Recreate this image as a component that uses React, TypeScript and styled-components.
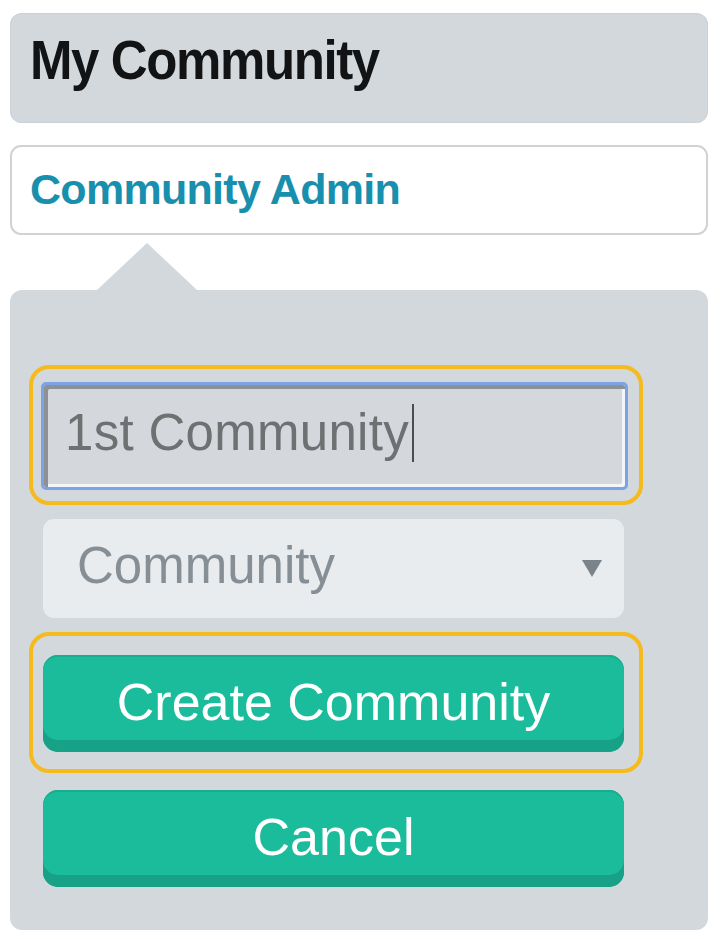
import React from "react";
import styled, { createGlobalStyle } from "styled-components";

const GlobalStyle = createGlobalStyle`
  html, body {
    margin: 0;
    padding: 0;
    background: #ffffff;
  }
  body {
    font-family: "Liberation Sans", Arial, Helvetica, sans-serif;
  }
`;

const Page = styled.div`
  width: 698px;
  padding: 13px 12px 9px 10px;
  display: flex;
  flex-direction: column;
`;

const Header = styled.div`
  box-sizing: border-box;
  height: 110px;
  padding: 20px 20px 0 20px;
  background: #d3d8dc;
  border-radius: 12px;
  box-shadow: inset 0 0 0 1px #cdd2d6;
`;

const Title = styled.h1`
  margin: 0;
  font-size: 51px;
  line-height: 58px;
  font-weight: 700;
  letter-spacing: -1.4px;
  color: #111314;
  transform: scaleY(1.1);
  transform-origin: left 80%;
`;

const AdminBox = styled.div`
  box-sizing: border-box;
  margin-top: 22px;
  height: 90px;
  padding: 17px 18px 0 18px;
  background: #ffffff;
  border: 2px solid #d0d2d4;
  border-radius: 11px;
`;

const AdminLink = styled.a`
  font-size: 43px;
  line-height: 50px;
  font-weight: 700;
  letter-spacing: -0.7px;
  color: #1890ad;
  text-decoration: none;
`;

const Panel = styled.div`
  position: relative;
  margin-top: 55px;
  height: 640px;
  box-sizing: border-box;
  padding: 75px 65px 43px 19px;
  background: #d3d8dc;
  border-radius: 12px;
  display: flex;
  flex-direction: column;

  &::before {
    content: "";
    position: absolute;
    left: 87px;
    top: -47px;
    width: 0;
    height: 0;
    border-left: 50px solid transparent;
    border-right: 50px solid transparent;
    border-bottom: 47px solid #d3d8dc;
  }
`;

const FocusRing = styled.div<{ $pad: string; $mt?: number }>`
  box-sizing: border-box;
  margin-top: ${(p) => p.$mt ?? 0}px;
  padding: ${(p) => p.$pad};
  border: 4px solid #f5ba1e;
  border-radius: 20px;
  display: flex;
  flex-direction: column;
`;

const TextInput = styled.div`
  box-sizing: border-box;
  height: 108px;
  width: 587px;
  padding: 0 0 6px 21px;
  display: flex;
  align-items: center;
  background: #d4d8dc;
  border: 3px solid #7ca3e4;
  border-radius: 5px;
  box-shadow: inset 4px 4px 0 #8d9095, inset -3px -3px 0 #f3f6f9;
  font-size: 51px;
  line-height: 58px;
  letter-spacing: 0.3px;
  color: #6e7072;
`;

const Caret = styled.span`
  display: inline-block;
  width: 2px;
  height: 58px;
  margin-left: 3px;
  background: #4a4c4e;
`;

const Select = styled.div`
  box-sizing: border-box;
  margin: 14px 0 0 14px;
  width: 581px;
  height: 99px;
  padding: 0 22px 6px 34px;
  display: flex;
  align-items: center;
  justify-content: space-between;
  background: #e8ecef;
  border-radius: 11px;
  font-size: 51px;
  line-height: 58px;
  color: #878f96;
`;

const Arrow = styled.span`
  width: 0;
  height: 0;
  margin-top: 6px;
  border-left: 10px solid transparent;
  border-right: 10px solid transparent;
  border-top: 17px solid #7b838a;
`;

const Button = styled.button<{ $ml?: number; $mt?: number }>`
  box-sizing: border-box;
  margin: ${(p) => p.$mt ?? 0}px 0 0 ${(p) => p.$ml ?? 0}px;
  width: 581px;
  height: 97px;
  padding: 0 0 4px 0;
  border: none;
  border-radius: 15px;
  background: #1bbc9b;
  box-shadow: inset 0 -12px 0 #17a186, inset 0 2px 0 #18ad8f;
  color: #ffffff;
  font-family: "Liberation Sans", Arial, Helvetica, sans-serif;
  font-size: 52px;
  line-height: 60px;
  display: flex;
  align-items: center;
  justify-content: center;
  cursor: pointer;
`;

export default function App() {
  return (
    <>
      <GlobalStyle />
      <Page>
        <Header>
          <Title>My Community</Title>
        </Header>
        <AdminBox>
          <AdminLink href="#">Community Admin</AdminLink>
        </AdminBox>
        <Panel>
          <FocusRing $pad="13px 11px 11px 8px">
            <TextInput>
              1st Community
              <Caret />
            </TextInput>
          </FocusRing>
          <Select>
            Community
            <Arrow />
          </Select>
          <FocusRing $pad="19px 15px 17px 10px" $mt={14}>
            <Button>Create Community</Button>
          </FocusRing>
          <Button $ml={14} $mt={17}>
            Cancel
          </Button>
        </Panel>
      </Page>
    </>
  );
}
